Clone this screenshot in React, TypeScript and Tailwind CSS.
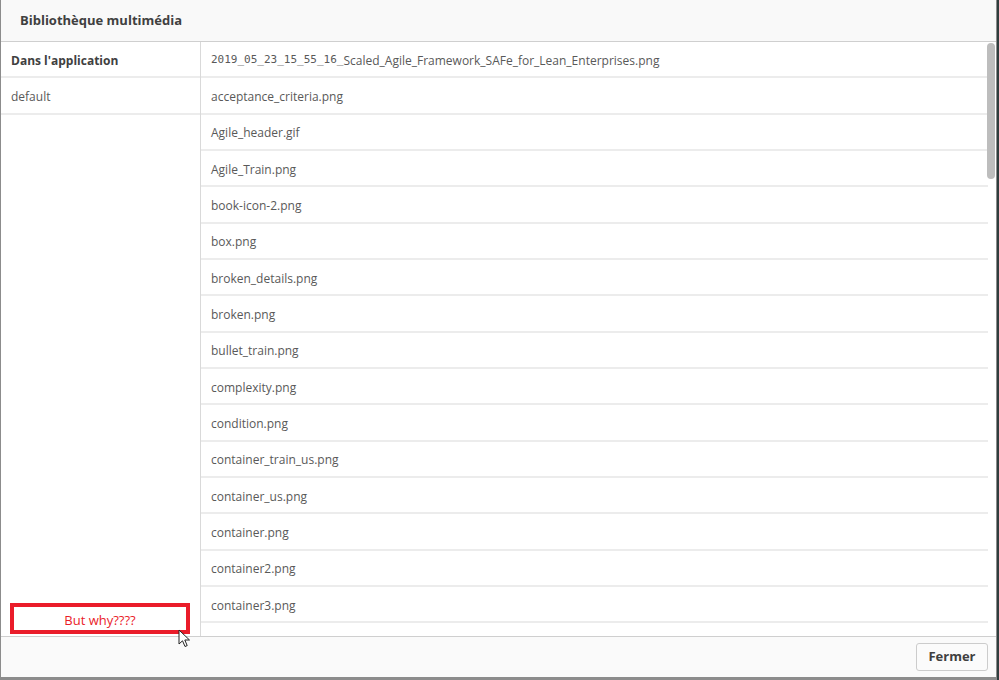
const files = [
  'acceptance_criteria.png',
  'Agile_header.gif',
  'Agile_Train.png',
  'book-icon-2.png',
  'box.png',
  'broken_details.png',
  'broken.png',
  'bullet_train.png',
  'complexity.png',
  'condition.png',
  'container_train_us.png',
  'container_us.png',
  'container.png',
  'container2.png',
  'container3.png',
]

const font = { fontFamily: '"Open Sans", "Liberation Sans", sans-serif' }

function Cursor() {
  return (
    <svg
      className="absolute left-[178px] top-[629px]"
      width="14"
      height="20"
      viewBox="0 0 14 20"
    >
      <path
        d="M1 1 L1 15 L4.5 11.8 L7 17.5 L9.2 16.6 L6.8 11 L11.5 11 Z"
        fill="white"
        stroke="#222"
        strokeWidth="1"
        strokeLinejoin="round"
      />
    </svg>
  )
}

export default function App() {
  return (
    <div className="relative w-[999px] h-[680px] flex bg-[#2f3d3d]" style={font}>
      <div className="w-[997px] h-[680px] flex flex-col bg-white border-l border-r border-b-[3px] border-[#8c8c8c]">
        <div className="h-[42px] shrink-0 flex items-center px-[19px] bg-[#f9f9f9] border-b border-[#cfcfcf]">
          <h1 className="text-[13px] font-bold text-[#404040]">Bibliothèque multimédia</h1>
        </div>

        <div className="flex flex-1 min-h-0">
          <div className="w-[200px] shrink-0 border-r border-[#d9d9d9] text-[12px] text-[#595959]">
            <div className="h-[36.33px] flex items-center px-[10px] pt-[3px] border-b-2 border-[#ececec] font-bold text-[#404040]">
              Dans l'application
            </div>
            <div className="h-[36.33px] flex items-center px-[10px] pt-[3px] border-b-2 border-[#ececec]">
              default
            </div>
          </div>

          <div className="relative flex-1 overflow-hidden">
            <div className="mr-[8px] text-[12px] text-[#595959]">
              <div className="h-[36.33px] flex items-center px-[10px] pt-[3px] border-b-2 border-[#ececec]">
                <span className="text-[11px]" style={{ fontFamily: '"DejaVu Sans Mono", monospace' }}>
                  2019_05_23_15_55_16_
                </span>
                <span>Scaled_Agile_Framework_SAFe_for_Lean_Enterprises.png</span>
              </div>
              {files.map((f) => (
                <div
                  key={f}
                  className="h-[36.33px] flex items-center px-[10px] pt-[3px] border-b-2 border-[#ececec]"
                >
                  {f}
                </div>
              ))}
              <div className="h-[36.33px] border-b-2 border-[#ececec]" />
            </div>
            <div className="absolute right-[1px] top-[1px] w-[8px] h-[136px] rounded bg-[#bdbdbd]" />
          </div>
        </div>

        <div className="h-[41px] shrink-0 flex items-center justify-end pr-[8px] bg-[#fafafa] border-t border-[#cfcfcf]">
          <button className="w-[72px] h-[28px] rounded-[3px] border border-[#cccccc] bg-[#fbfbfb] text-[13px] font-bold text-[#404040]">
            Fermer
          </button>
        </div>
      </div>

      <div className="absolute left-[10px] top-[603px] w-[180px] h-[31px] border-4 border-[#ea1c2a] flex items-center justify-center">
        <span className="text-[13px] text-[#ea1c2a] mt-[4px]">But why????</span>
      </div>
      <Cursor />
    </div>
  )
}
